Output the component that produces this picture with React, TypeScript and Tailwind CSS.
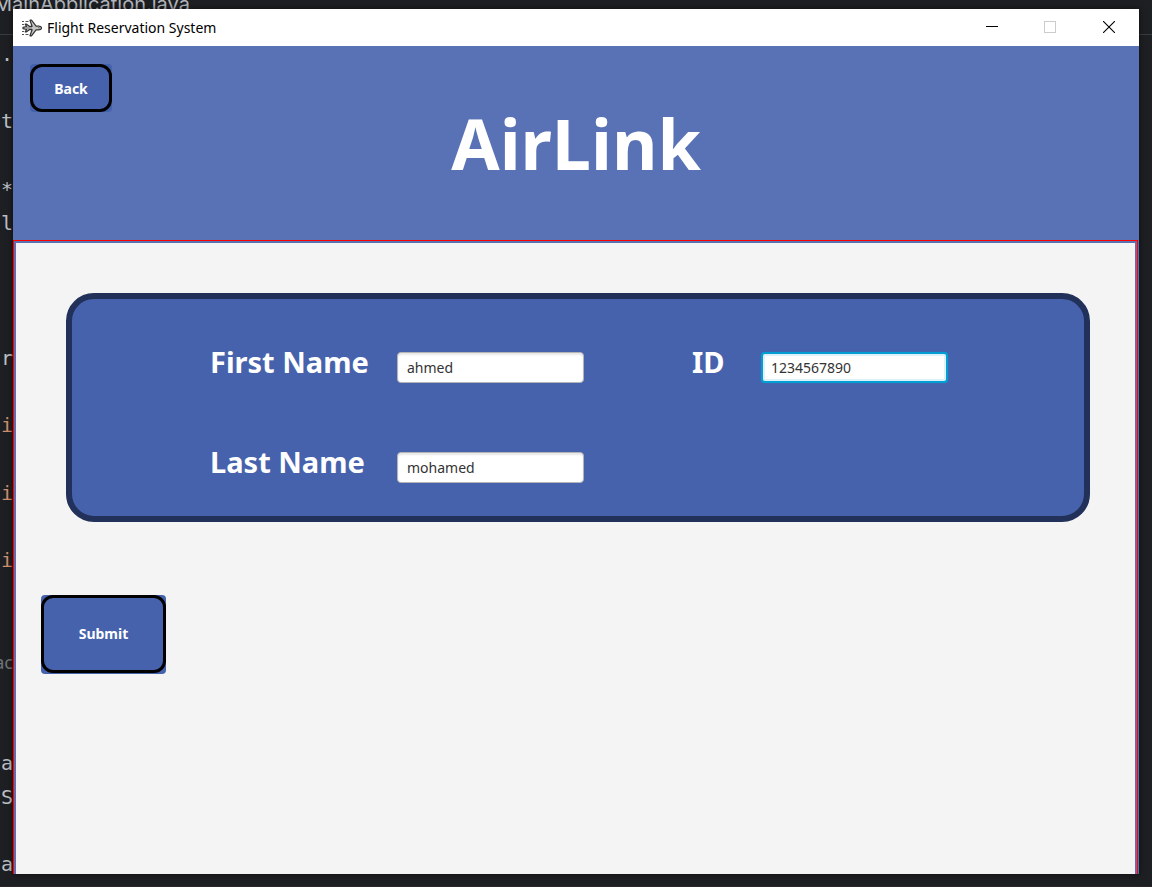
import { useState } from "react";

const codeLines: { text: string; tone?: "keyword" | "hint" }[] = [
  { text: "." },
  { text: "" },
  { text: "t" },
  { text: "" },
  { text: "*" },
  { text: "l" },
  { text: "" },
  { text: "" },
  { text: "" },
  { text: "r" },
  { text: "" },
  { text: "i", tone: "keyword" },
  { text: "" },
  { text: "i", tone: "keyword" },
  { text: "" },
  { text: "i", tone: "keyword" },
  { text: "" },
  { text: "" },
  { text: "ac", tone: "hint" },
  { text: "" },
  { text: "" },
  { text: "a" },
  { text: "S" },
  { text: "" },
  { text: "a" },
];

const tones = {
  plain: "font-['DejaVu_Sans_Mono',monospace] text-[20px] text-[#bcbec4]",
  keyword: "font-['DejaVu_Sans_Mono',monospace] text-[20px] text-[#cf8e6d]",
  hint: "font-['Noto_Sans',sans-serif] text-[18px] text-[#6f737a]",
};

/** The code editor that shows around the edges of the window. */
function EditorBackdrop() {
  return (
    <div aria-hidden="true" className="absolute inset-0 overflow-hidden bg-[#1e1f22]">
      <div className="absolute -top-2 -left-1.5 font-['Inter',sans-serif] text-[20px] leading-6 text-[#b4b8bf]">
        MainApplication.java
      </div>
      <div className="absolute inset-x-0 top-[34px] h-px bg-[#393b40]" />
      <div className="absolute top-[37px] bottom-[6px] left-0 flex w-[13px] flex-col overflow-hidden">
        {codeLines.map((line, i) => (
          <div key={i} className="flex flex-1 items-center justify-end">
            <span className={`leading-6 ${tones[line.tone ?? "plain"]}`}>{line.text}</span>
          </div>
        ))}
      </div>
      <div className="absolute inset-x-0 bottom-0 h-px bg-[#2b2629]" />
    </div>
  );
}

function PlaneIcon() {
  return (
    <svg width="20" height="18" viewBox="0 0 20 18" fill="none" stroke="#333" strokeLinejoin="round">
      <path d="M0 2.5h2M3.5 2.5h3M0 5.5h2M0 12.5h2M0 15.5h2M3.5 15.5h3" stroke="#555" />
      <path
        d="M4.6 7.5 3.2 5.2h1.4l2.6 2.1h2.9L8 1.2h1.5l4.6 5.9h2.6c1.6 0 2.8.9 2.8 1.9s-1.2 1.9-2.8 1.9h-2.6l-4.6 5.9H8l2.1-6.1H7.2l-2.6 2.1H3.2l1.4-2.3L1 9.6V8.4z"
        fill="#c4c4c4"
        strokeWidth="1.2"
      />
      <path d="M4 9h6M16.5 7.5v1.5h2" stroke="#777" />
    </svg>
  );
}

function TitleBar() {
  return (
    <header className="flex h-[37px] shrink-0 items-center bg-white pl-[9px] font-['Noto_Sans',sans-serif]">
      <PlaneIcon />
      <span className="ml-[5px] text-[14px] leading-5 text-black">Flight Reservation System</span>
      <div className="ml-auto flex h-full">
        <button aria-label="Minimize" className="flex w-[58px] items-center justify-center">
          <svg width="12" height="12" viewBox="0 0 12 12" shapeRendering="crispEdges">
            <path d="M0 4.5h12" stroke="#000" />
          </svg>
        </button>
        <button aria-label="Maximize" disabled className="flex w-[58px] items-start justify-center pt-3">
          <svg width="12" height="12" viewBox="0 0 12 12" fill="none" shapeRendering="crispEdges">
            <path d="M.5.5h11v11H.5z" stroke="#ccc" />
          </svg>
        </button>
        <button aria-label="Close" className="flex w-[60px] items-start justify-center pt-3">
          <svg width="12" height="12" viewBox="0 0 12 12">
            <path d="M0 0l12 12M12 0L0 12" stroke="#000" strokeWidth="1.1" />
          </svg>
        </button>
      </div>
    </header>
  );
}

const labelClass = "pb-[11px] text-[29px] leading-10 font-bold whitespace-nowrap text-white";
const inputClass =
  "h-[31px] w-full rounded-[4px] border border-[#b5b5b5] bg-white px-[9px] text-[14px] leading-5 text-[#333] shadow-[inset_0_2px_2px_#e8e8e8] outline-none";
const activeInputClass =
  "h-[31px] w-full rounded-[4px] border-2 border-[#039ed3] bg-white px-2 text-[14px] leading-5 text-[#333] shadow-[inset_0_0_0_2px_#dff1f8,0_0_1px_#039ed3] outline-none";

export default function App() {
  const [firstName, setFirstName] = useState("ahmed");
  const [lastName, setLastName] = useState("mohamed");
  const [id, setId] = useState("1234567890");

  return (
    <div className="relative flex min-h-screen flex-col px-[13px] pt-[9px] pb-[13px] font-['Noto_Sans',sans-serif]">
      <EditorBackdrop />
      <main className="relative flex flex-1 flex-col bg-[#5872b5] shadow-[0_0_6px_rgba(0,0,0,0.6)]">
        <TitleBar />
        <section className="grid h-[194px] shrink-0 grid-cols-[1fr_auto_1fr] items-start px-[17px] pt-[18px]">
          <div className="justify-self-start rounded-[4px] bg-[#4461ae]">
            <button className="block h-12 w-[82px] rounded-[12px] border-[3px] border-black bg-[#4762ac] pt-px text-[14px] leading-5 font-bold text-white">
              Back
            </button>
          </div>
          <h1 className="pt-[31px] text-[70px] leading-[96px] font-bold text-white">AirLink</h1>
        </section>

        <div className="mr-px flex flex-1 border border-b-0 border-[#ff0000]">
          <form
            onSubmit={(e) => e.preventDefault()}
            className="flex flex-1 flex-col items-start border-2 border-b-0 border-x-[#6f68a8] border-t-[#5d70b0] bg-[#f4f4f4] pt-[50px] pr-[45px] pl-[50px]"
          >
            <div className="grid w-full grid-cols-[187px_187px_108px_69px_187px] content-start items-center gap-y-[49px] rounded-[28px] border-[6px] border-[#22315a] bg-[#4762ac] pt-[43px] pb-[23px] pl-[138px]">
              <label htmlFor="first-name" className={labelClass}>First Name</label>
              <input id="first-name" className={inputClass} value={firstName} onChange={(e) => setFirstName(e.target.value)} />
              <label htmlFor="passenger-id" className={`col-start-4 ${labelClass}`}>ID</label>
              <input id="passenger-id" className={activeInputClass} value={id} onChange={(e) => setId(e.target.value)} />
              <label htmlFor="last-name" className={labelClass}>Last Name</label>
              <input id="last-name" className={inputClass} value={lastName} onChange={(e) => setLastName(e.target.value)} />
            </div>
            <div className="mt-[73px] -ml-[25px] rounded-[4px] bg-[#4762ac] pb-px">
              <button
                type="submit"
                className="block h-[78px] w-[125px] rounded-[12px] border-[3px] border-black text-[14px] leading-5 font-bold text-white"
              >
                Submit
              </button>
            </div>
          </form>
        </div>
      </main>
    </div>
  );
}
